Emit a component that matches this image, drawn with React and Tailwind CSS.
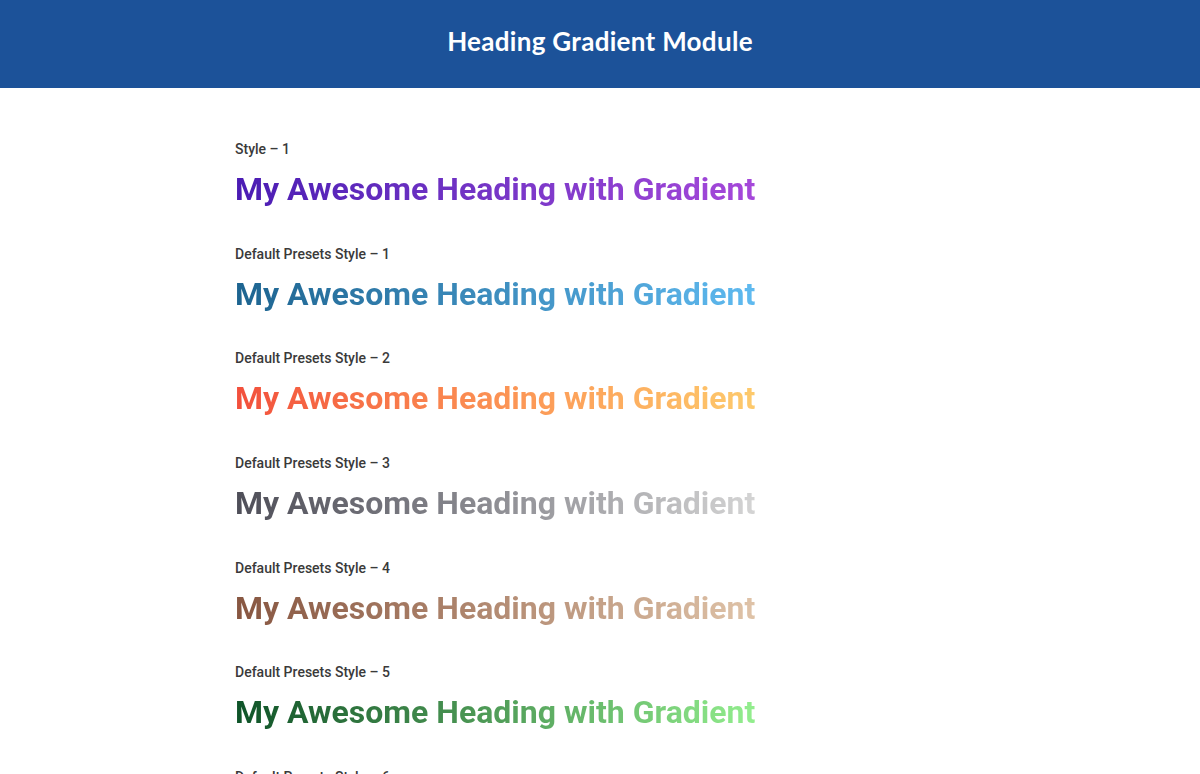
import React from "react";

const styles = [
  {
    label: "Style – 1",
    grad: "bg-gradient-to-r from-[#4a1bb3] to-[#a648da]",
  },
  {
    label: "Default Presets Style – 1",
    grad: "bg-gradient-to-r from-[#1d6490] to-[#5fbaf0]",
  },
  {
    label: "Default Presets Style – 2",
    grad: "bg-gradient-to-r from-[#f24f3c] to-[#fdca6c]",
  },
  {
    label: "Default Presets Style – 3",
    grad: "bg-gradient-to-r from-[#4e4e58] to-[#d4d4d4]",
  },
  {
    label: "Default Presets Style – 4",
    grad: "bg-gradient-to-r from-[#875641] to-[#dfc3a8]",
  },
  {
    label: "Default Presets Style – 5",
    grad: "bg-gradient-to-r from-[#0d5328] to-[#93ee8e]",
  },
  {
    label: "Default Presets Style – 6",
    grad: "bg-gradient-to-r from-[#0f0c29] to-[#6c6cf0]",
  },
];

const App = () => {
  return (
    <div className="h-screen overflow-hidden bg-white font-['Roboto',sans-serif]">
      <header className="h-[88px] bg-[#1c5299] flex items-center justify-center">
        <h1 className="text-white text-[26px] font-bold tracking-[0.3px] font-['Lato','Noto_Sans',sans-serif] pb-[6px]">
          Heading Gradient Module
        </h1>
      </header>

      <main className="w-[730px] mx-auto pt-[50px]">
        {styles.map((item, index) => {
          return (
            <div key={index} className="h-[104.7px]">
              <p className="text-[14px] font-medium text-[#3a3a3a] leading-[22px]">
                {item.label}
              </p>
              <h2
                className={`inline-block mt-[9px] text-[32px] leading-[40px] font-bold text-transparent bg-clip-text ${item.grad}`}
              >
                My Awesome Heading with Gradient
              </h2>
            </div>
          );
        })}
      </main>
    </div>
  );
};

export default App;
